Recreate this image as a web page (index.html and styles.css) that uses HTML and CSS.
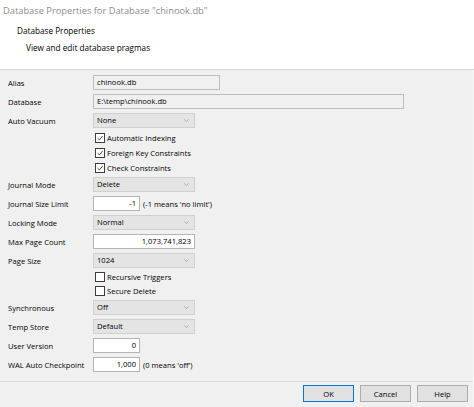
FILE: index.html
```html
<!DOCTYPE html>
<html>
<head>
<meta charset="utf-8">
<link rel="stylesheet" href="styles.css">
</head>
<body>
<div class="dialog">
  <div class="titlebar">Database Properties for Database "chinook.db"</div>
  <div class="header">
    <div class="h-title">Database Properties</div>
    <div class="h-sub">View and edit database pragmas</div>
  </div>
  <div class="body">
    <div class="form">
      <div class="row"><span class="label">Alias</span><span class="field ro w-alias">chinook.db</span></div>
      <div class="row"><span class="label">Database</span><span class="field ro w-db">E:\temp\chinook.db</span></div>
      <div class="row"><span class="label">Auto Vacuum</span><span class="combo">None<svg class="chev" viewBox="0 0 7 4"><path d="M0.5 0.5 L3.5 3.5 L6.5 0.5"/></svg></span></div>
      <div class="crow top"><span class="label"></span><span class="cb"><svg class="tick" viewBox="0 0 10 10"><path d="M2 5.2 L4.2 7.4 L8.2 2.6"/></svg></span><span class="cbl">Automatic Indexing</span></div>
      <div class="crow top"><span class="label"></span><span class="cb"><svg class="tick" viewBox="0 0 10 10"><path d="M2 5.2 L4.2 7.4 L8.2 2.6"/></svg></span><span class="cbl">Foreign Key Constraints</span></div>
      <div class="crow top"><span class="label"></span><span class="cb"><svg class="tick" viewBox="0 0 10 10"><path d="M2 5.2 L4.2 7.4 L8.2 2.6"/></svg></span><span class="cbl">Check Constraints</span></div>
      <div class="row"><span class="label">Journal Mode</span><span class="combo">Delete<svg class="chev" viewBox="0 0 7 4"><path d="M0.5 0.5 L3.5 3.5 L6.5 0.5"/></svg></span></div>
      <div class="row"><span class="label">Journal Size Limit</span><span class="field num w-small">-1</span><span class="note">(-1 means 'no limit')</span></div>
      <div class="row"><span class="label">Locking Mode</span><span class="combo">Normal<svg class="chev" viewBox="0 0 7 4"><path d="M0.5 0.5 L3.5 3.5 L6.5 0.5"/></svg></span></div>
      <div class="row"><span class="label">Max Page Count</span><span class="field num w-mid">1,073,741,823</span></div>
      <div class="row"><span class="label">Page Size</span><span class="combo">1024<svg class="chev" viewBox="0 0 7 4"><path d="M0.5 0.5 L3.5 3.5 L6.5 0.5"/></svg></span></div>
      <div class="crow bot"><span class="label"></span><span class="cb"></span><span class="cbl">Recursive Triggers</span></div>
      <div class="crow bot"><span class="label"></span><span class="cb"></span><span class="cbl">Secure Delete</span></div>
      <div class="row"><span class="label">Synchronous</span><span class="combo">Off<svg class="chev" viewBox="0 0 7 4"><path d="M0.5 0.5 L3.5 3.5 L6.5 0.5"/></svg></span></div>
      <div class="row"><span class="label">Temp Store</span><span class="combo">Default<svg class="chev" viewBox="0 0 7 4"><path d="M0.5 0.5 L3.5 3.5 L6.5 0.5"/></svg></span></div>
      <div class="row"><span class="label">User Version</span><span class="field num w-small">0</span></div>
      <div class="row"><span class="label">WAL Auto Checkpoint</span><span class="field num w-small">1,000</span><span class="note">(0 means 'off')</span></div>
    </div>
    <div class="footer">
      <button class="btn default">OK</button>
      <button class="btn">Cancel</button>
      <button class="btn">Help</button>
    </div>
  </div>
</div>
</body>
</html>
```

FILE: styles.css
```css
html, body {
  margin: 0;
  padding: 0;
  background: #f0f0f0;
}
.dialog {
  width: 474px;
  height: 407px;
  display: flex;
  flex-direction: column;
  font-family: "Open Sans", "Noto Sans", sans-serif;
  font-size: 7.6px;
  color: #000;
  overflow: hidden;
}
.titlebar {
  height: 22px;
  line-height: 22px;
  padding-left: 3px;
  background: #fff;
  color: #8c8c8c;
  font-size: 9.3px;
}
.header {
  background: #fff;
  border-bottom: 1px solid #d8d8d8;
  box-sizing: border-box;
  height: 48px;
  font-size: 8.2px;
}
.h-title {
  padding-left: 17px;
  line-height: 17px;
}
.h-sub {
  padding-left: 26px;
  line-height: 17px;
}
.body {
  flex: 1;
  display: flex;
  flex-direction: column;
  border-right: 1px solid #fafafa;
}
.form {
  padding-top: 3px;
  padding-left: 8px;
  display: flex;
  flex-direction: column;
  flex: 1;
}
.row {
  height: 19px;
  display: flex;
  align-items: center;
}
.crow {
  display: flex;
  align-items: center;
}
.crow.top { height: 15px; }
.crow.bot { height: 14px; }
.label {
  width: 85px;
  flex: none;
}
.field {
  height: 15px;
  box-sizing: border-box;
  border: 1px solid #b4b4b4;
  background: #fff;
  line-height: 13px;
  padding: 0 3px;
  white-space: nowrap;
}
.field.ro {
  background: #f0f0f0;
  border-color: #bcbcbc;
}
.field.num { text-align: right; }
.w-alias { width: 127px; }
.w-db { width: 311px; }
.w-small { width: 47px; }
.w-mid { width: 102px; }
.note { margin-left: 3px; }
.combo {
  width: 102px;
  height: 15px;
  box-sizing: border-box;
  border: 1px solid #d0d0d0;
  background: #e4e4e4;
  line-height: 13px;
  padding: 0 3px;
  display: flex;
  align-items: center;
  justify-content: space-between;
}
.chev {
  width: 5px;
  height: 3px;
  margin-right: 2px;
  fill: none;
  stroke: #9a9a9a;
  stroke-width: 1;
}
.cb {
  width: 10px;
  height: 10px;
  box-sizing: border-box;
  border: 1px solid #3c3c3c;
  background: #fff;
  margin-left: 2px;
  display: flex;
}
.tick {
  width: 8px;
  height: 8px;
  fill: none;
  stroke: #2a2a2a;
  stroke-width: 1.1;
}
.cbl { margin-left: 2px; }
.footer {
  height: 26px;
  border-top: 1px solid #dcdcdc;
  display: flex;
  justify-content: flex-end;
  align-items: flex-start;
  padding-top: 3px;
  padding-right: 5px;
  gap: 6px;
  box-sizing: border-box;
}
.btn {
  width: 51px;
  height: 17px;
  box-sizing: border-box;
  border: 1px solid #adadad;
  background: #e1e1e1;
  font-family: inherit;
  font-size: 7.6px;
  color: #000;
  padding: 0;
  margin: 0;
}
.btn.default {
  border-color: #0078d7;
}
```
